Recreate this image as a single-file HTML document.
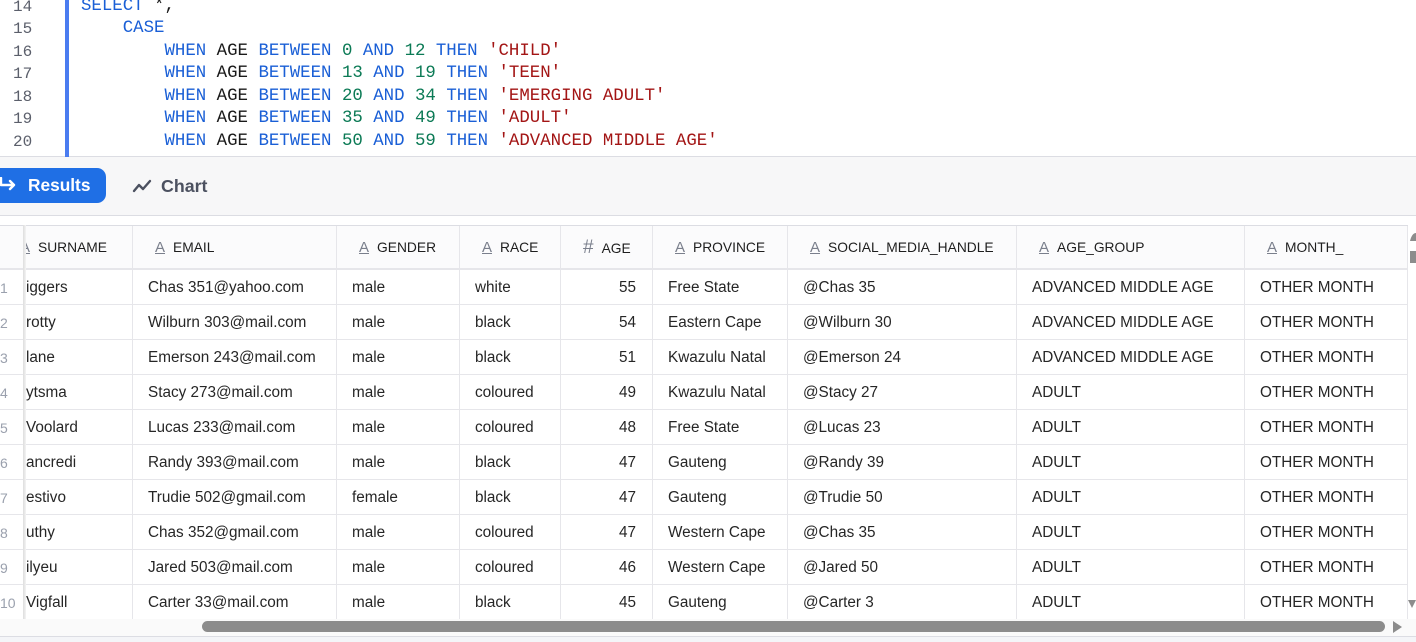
<!DOCTYPE html>
<html><head><meta charset="utf-8"><style>
*{margin:0;padding:0;box-sizing:border-box}
body{width:1416px;height:642px;overflow:hidden;background:#fff;font-family:"Liberation Sans",sans-serif;position:relative}
.code{position:absolute;left:0;top:0;width:1416px;height:157px;background:#fff;border-bottom:1px solid #dcdde3;font-family:"Liberation Mono",monospace;font-size:17.4px}
.ln{position:absolute;left:13px;color:#5b5f6b;font-size:16px}
.cl{position:absolute;left:81px;white-space:pre;color:#1a1a1a}
.k{color:#1a5fd6}.n{color:#0b7a55}.s{color:#a31515}
.bar{position:absolute;left:65px;top:0;width:4px;height:157px;background:#4a7cf0}
.tabs{position:absolute;left:0;top:157px;width:1416px;height:59px;background:#f7f7f8;border-bottom:1px solid #dcdde3}
.res{position:absolute;left:-10px;top:11px;width:116px;height:35px;background:#1f6fe5;border-radius:9px;color:#fff;font-weight:bold;font-size:17.3px;line-height:35px;padding-left:38px}
.chart{position:absolute;left:161px;top:19px;color:#4c5160;font-weight:bold;font-size:17.8px}
.tbl{position:absolute;left:0;top:225px;width:1408px;height:394px;background:#fff;border-top:1px solid #dcdde3}
.hdr{position:absolute;top:0;height:44px;border-right:1px solid #e6e6ea;border-bottom:2px solid #e6e6ea;background:#fbfbfc;font-size:13.8px;color:#1e1e1e;line-height:44px;padding-left:22px;white-space:nowrap;overflow:hidden}
.hdr i{font-style:normal;color:#7a7f8c;text-decoration:underline;margin-right:8px;font-size:15px}
.c{position:absolute;height:35px;border-right:1px solid #e6e6ea;border-bottom:1px solid #e6e6ea;font-size:15.3px;color:#262626;line-height:36px;padding-left:15px;white-space:nowrap;overflow:hidden}
.rn{position:absolute;left:0;width:25px;color:#9aa0ad;font-size:14px;line-height:36px;text-align:right;padding-right:19px;height:35px;border-bottom:1px solid #e6e6ea;overflow:hidden}
.sh{position:absolute;left:23px;top:225px;width:3px;height:394px;background:linear-gradient(90deg,#ddd,#f4f4f4)}
.hs{position:absolute;left:202px;top:621px;width:1183px;height:11px;background:#8c8c8c;border-radius:6px}
.bot{position:absolute;left:0;top:619px;width:1416px;height:23px;background:#fafafa}
.botl{position:absolute;left:0;top:636px;width:1416px;height:6px;background:#f4f5f8;border-top:1px solid #dcdde3}
</style></head><body>
<div class="code">
<div class="bar"></div>
<div class="ln" style="top:-2px">14</div><div class="ln" style="top:20px">15</div><div class="ln" style="top:43px">16</div><div class="ln" style="top:65px">17</div><div class="ln" style="top:88px">18</div><div class="ln" style="top:110px">19</div><div class="ln" style="top:133px">20</div>
<div class="cl" style="top:-3px"><span class="k">SELECT</span> *,</div>
<div class="cl" style="top:19px">    <span class="k">CASE</span></div>
<div class="cl" style="top:42px">        <span class="k">WHEN</span> AGE <span class="k">BETWEEN</span> <span class="n">0</span> <span class="k">AND</span> <span class="n">12</span> <span class="k">THEN</span> <span class="s">'CHILD'</span></div>
<div class="cl" style="top:64px">        <span class="k">WHEN</span> AGE <span class="k">BETWEEN</span> <span class="n">13</span> <span class="k">AND</span> <span class="n">19</span> <span class="k">THEN</span> <span class="s">'TEEN'</span></div>
<div class="cl" style="top:87px">        <span class="k">WHEN</span> AGE <span class="k">BETWEEN</span> <span class="n">20</span> <span class="k">AND</span> <span class="n">34</span> <span class="k">THEN</span> <span class="s">'EMERGING ADULT'</span></div>
<div class="cl" style="top:109px">        <span class="k">WHEN</span> AGE <span class="k">BETWEEN</span> <span class="n">35</span> <span class="k">AND</span> <span class="n">49</span> <span class="k">THEN</span> <span class="s">'ADULT'</span></div>
<div class="cl" style="top:132px">        <span class="k">WHEN</span> AGE <span class="k">BETWEEN</span> <span class="n">50</span> <span class="k">AND</span> <span class="n">59</span> <span class="k">THEN</span> <span class="s">'ADVANCED MIDDLE AGE'</span></div>
</div>
<div class="tabs">
<div class="res"><svg style="position:absolute;left:8px;top:9px" width="20" height="18" viewBox="0 0 20 18"><path d="M3 1v7h13M12 4l4 4-4 4" fill="none" stroke="#fff" stroke-width="2.4" stroke-linecap="round" stroke-linejoin="round"/></svg>Results</div>
<svg style="position:absolute;left:132px;top:20px" width="20" height="18" viewBox="0 0 20 18"><path d="M2 14l5-6 4 4 7-8" fill="none" stroke="#4c5160" stroke-width="2.4" stroke-linecap="round" stroke-linejoin="round"/></svg>
<div class="chart">Chart</div>
</div>
<div class="tbl" id="t"></div>
<div class="bot"></div>
<div class="hs"></div>
<svg style="position:absolute;left:1392px;top:620px" width="12" height="14"><path d="M1 1l9 6-9 6z" fill="#8c8c8c"/></svg>
<svg style="position:absolute;left:1408px;top:231px" width="8" height="40"><path d="M2 10q2-8 6-8v8zM2 20h6v12h-6z" fill="#8c8c8c"/></svg>
<svg style="position:absolute;left:1408px;top:600px" width="8" height="10"><path d="M0 0h8l-4 8z" fill="#8c8c8c"/></svg>
<div class="botl"></div>
<div class="sh"></div>
<script>
var cols=[[25,133,"SURNAME","A"],[133,337,"EMAIL","A"],[337,460,"GENDER","A"],[460,561,"RACE","A"],[561,653,"AGE","#"],[653,788,"PROVINCE","A"],[788,1017,"SOCIAL_MEDIA_HANDLE","A"],[1017,1245,"AGE_GROUP","A"],[1245,1408,"MONTH_","A"]];
var rows=[["iggers","Chas 351@yahoo.com","male","white","55","Free State","@Chas 35","ADVANCED MIDDLE AGE","OTHER MONTH"],
["rotty","Wilburn 303@mail.com","male","black","54","Eastern Cape","@Wilburn 30","ADVANCED MIDDLE AGE","OTHER MONTH"],
["lane","Emerson 243@mail.com","male","black","51","Kwazulu Natal","@Emerson 24","ADVANCED MIDDLE AGE","OTHER MONTH"],
["ytsma","Stacy 273@mail.com","male","coloured","49","Kwazulu Natal","@Stacy 27","ADULT","OTHER MONTH"],
["Voolard","Lucas 233@mail.com","male","coloured","48","Free State","@Lucas 23","ADULT","OTHER MONTH"],
["ancredi","Randy 393@mail.com","male","black","47","Gauteng","@Randy 39","ADULT","OTHER MONTH"],
["estivo","Trudie 502@gmail.com","female","black","47","Gauteng","@Trudie 50","ADULT","OTHER MONTH"],
["uthy","Chas 352@gmail.com","male","coloured","47","Western Cape","@Chas 35","ADULT","OTHER MONTH"],
["ilyeu","Jared 503@mail.com","male","coloured","46","Western Cape","@Jared 50","ADULT","OTHER MONTH"],
["Vigfall","Carter 33@mail.com","male","black","45","Gauteng","@Carter 3","ADULT","OTHER MONTH"]];
var h='<div class="hdr" style="left:0;width:25px;padding:0"></div>';
cols.forEach(function(c,j){h+='<div class="hdr" style="left:'+c[0]+'px;width:'+(c[1]-c[0])+'px;'+(j==0?'padding-left:0;text-indent:-5px;':'')+'"><i'+(c[3]=="#"?' style="text-decoration:none;font-size:19px"':'')+'>'+c[3]+'</i>'+c[2]+'</div>';});
rows.forEach(function(r,i){var y=44+i*35;h+='<div class="rn" style="top:'+y+'px">'+(i+1)+'</div>';
cols.forEach(function(c,j){h+='<div class="c" style="top:'+y+'px;left:'+c[0]+'px;width:'+(c[1]-c[0])+'px;'+(j==0?'padding-left:1px;':'')+(j==4?'text-align:right;padding-right:16px;':'')+'">'+r[j]+'</div>';});});
document.getElementById('t').innerHTML=h;
</script>
</body></html>
